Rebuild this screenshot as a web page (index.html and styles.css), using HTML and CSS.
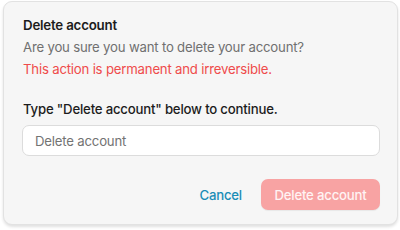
FILE: index.html
```html
<!DOCTYPE html>
<html>
<head>
<meta charset="utf-8">
<link rel="stylesheet" href="styles.css">
</head>
<body>
<div class="dialog">
  <h2 class="title">Delete account</h2>
  <p class="desc">Are you sure you want to delete your account?</p>
  <p class="warn">This action is permanent and irreversible.</p>
  <label class="label" for="confirm">Type "Delete account" below to continue.</label>
  <input id="confirm" class="input" type="text" placeholder="Delete account">
  <div class="actions">
    <button class="btn-cancel">Cancel</button>
    <button class="btn-delete">Delete account</button>
  </div>
</div>
</body>
</html>
```
FILE: styles.css
```css
html, body {
  margin: 0;
  padding: 0;
  background: #ffffff;
}
body {
  padding: 1px 2px 5px 3px;
  font-family: Inter, "Noto Sans", sans-serif;
  letter-spacing: -0.2px;
}
.dialog {
  box-sizing: border-box;
  width: 395px;
  height: 224px;
  background: #f6f6f6;
  border: 1px solid #e2e2e2;
  border-radius: 9px;
  box-shadow: 0 2px 3px rgba(0,0,0,0.12);
  padding: 14px 0 0 19px;
  display: flex;
  flex-direction: column;
}
.title {
  margin: 0;
  font-size: 13.3px;
  font-weight: 600;
  color: #1c1c1c;
  line-height: 18px;
}
.desc {
  margin: 4px 0 0;
  font-size: 13.2px;
  color: #707070;
  line-height: 19px;
}
.warn {
  margin: 3px 0 0;
  font-size: 13.2px;
  color: #ef4b4b;
  line-height: 19px;
}
.label {
  margin-top: 21px;
  font-size: 13.2px;
  color: #1c1c1c;
  font-weight: 500;
  line-height: 19px;
}
.input {
  box-sizing: border-box;
  margin-top: 6px;
  margin-left: -1px;
  width: 358px;
  height: 31px;
  border: 1px solid #dcdcdc;
  border-radius: 7px;
  background: #fff;
  padding: 0 12px;
  font-family: inherit;
  font-size: 13.2px;
  letter-spacing: inherit;
  color: #1c1c1c;
  outline: none;
}
.input::placeholder {
  color: #737373;
}
.actions {
  margin-top: 23px;
  margin-left: -1px;
  width: 358px;
  display: flex;
  justify-content: flex-end;
  align-items: center;
  gap: 19px;
}
.btn-cancel {
  background: none;
  border: none;
  padding: 0;
  font-family: inherit;
  font-size: 13.2px;
  letter-spacing: inherit;
  font-weight: 500;
  color: #1b8db6;
}
.btn-delete {
  box-sizing: border-box;
  height: 31px;
  width: 119px;
  border: none;
  border-radius: 7px;
  background: #f8a3a3;
  color: #fff3f3;
  font-family: inherit;
  font-size: 13.2px;
  letter-spacing: inherit;
  font-weight: 500;
  box-shadow: 0 1px 1px rgba(0,0,0,0.06);
}
```
